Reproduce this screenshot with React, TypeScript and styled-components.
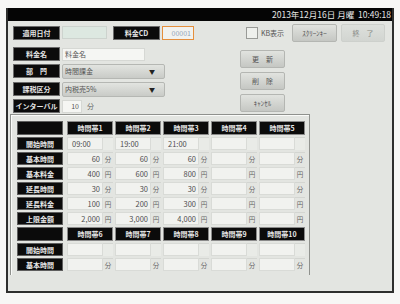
import styled, { createGlobalStyle } from 'styled-components';

const GlobalStyle = createGlobalStyle`
  html, body {
    margin: 0;
    padding: 0;
    background: #f7f7f5;
  }
  body {
    font-family: "Noto Sans CJK JP", "Noto Sans", sans-serif;
  }
`;

interface Row {
  label: string;
  unit: string;
  values: string[];
  left?: boolean;
}

const firstSlots = ['時間帯1', '時間帯2', '時間帯3', '時間帯4', '時間帯5'];
const secondSlots = ['時間帯6', '時間帯7', '時間帯8', '時間帯9', '時間帯10'];

const firstRows: Row[] = [
  { label: '開始時間', unit: '', values: ['09:00', '19:00', '21:00', '', ''], left: true },
  { label: '基本時間', unit: '分', values: ['60', '60', '60', '', ''] },
  { label: '基本料金', unit: '円', values: ['400', '600', '800', '', ''] },
  { label: '延長時間', unit: '分', values: ['30', '30', '30', '', ''] },
  { label: '延長料金', unit: '円', values: ['100', '200', '300', '', ''] },
  { label: '上限金額', unit: '円', values: ['2,000', '3,000', '4,000', '', ''] },
];

const secondRows: Row[] = [
  { label: '開始時間', unit: '', values: ['', '', '', '', ''], left: true },
  { label: '基本時間', unit: '分', values: ['', '', '', '', ''] },
];

const SlotTable = ({ slots, rows }: { slots: string[]; rows: Row[] }) => (
  <>
    <TableRow $height={14}>
      <RowLabel />
      {slots.map((s) => (
        <ColHead key={s}>{s}</ColHead>
      ))}
    </TableRow>
    {rows.map((r) => (
      <TableRow key={r.label} $height={13}>
        <RowLabel>{r.label}</RowLabel>
        {r.values.map((v, i) => (
          <SlotCell key={i}>
            <CellInput $left={r.left}>{v}</CellInput>
            <Unit $empty={!r.unit}>{r.unit}</Unit>
          </SlotCell>
        ))}
      </TableRow>
    ))}
  </>
);

export default function App() {
  return (
    <>
      <GlobalStyle />
      <Screen>
        <Header>2013年12月16日 月曜&nbsp;&nbsp;10:49:18</Header>
        <Body>
          <Top>
            <FormCol>
              <FormRow $height={17}>
                <Label>適用日付</Label>
                <DateInput />
                <Label $gap={6}>料金CD</Label>
                <CodeInput>00001</CodeInput>
              </FormRow>
              <Fields>
                <FormRow $height={14}>
                  <Label>料金名</Label>
                  <TextInput $width={83}>料金名</TextInput>
                </FormRow>
                <FormRow $height={16}>
                  <Label>部　門</Label>
                  <Select>
                    時間課金
                    <Arrow>▼</Arrow>
                  </Select>
                </FormRow>
                <FormRow $height={16}>
                  <Label>課税区分</Label>
                  <Select>
                    内税売5%
                    <Arrow>▼</Arrow>
                  </Select>
                </FormRow>
                <FormRow $height={14}>
                  <Label>インターバル</Label>
                  <TextInput $width={20} $right>
                    10
                  </TextInput>
                  <InlineUnit>分</InlineUnit>
                </FormRow>
              </Fields>
            </FormCol>
            <ActionCol>
              <ActionBar>
                <CheckBox />
                <CheckText>KB表示</CheckText>
                <BarButtons>
                  <Button $width={45}>ｽｸﾘｰﾝｷｰ</Button>
                  <Button $width={44} $disabled>
                    終　了
                  </Button>
                </BarButtons>
              </ActionBar>
              <ButtonStack>
                <Button $width={45}>更　新</Button>
                <Button $width={45}>削　除</Button>
                <Button $width={45}>ｷｬﾝｾﾙ</Button>
              </ButtonStack>
            </ActionCol>
          </Top>
          <Panel>
            <Table>
              <SlotTable slots={firstSlots} rows={firstRows} />
              <SlotTable slots={secondSlots} rows={secondRows} />
            </Table>
          </Panel>
        </Body>
      </Screen>
    </>
  );
}

const Screen = styled.div`
  box-sizing: border-box;
  width: 388px;
  height: 285px;
  margin: 8px 0 0 6px;
  background: #e3e5e1;
  border: 2px solid #2e2f2d;
  border-top: none;
  display: flex;
  flex-direction: column;
  overflow: hidden;
`;

const Header = styled.div`
  height: 13px;
  flex: none;
  background: #050505;
  color: #e6e6e6;
  font-size: 8.5px;
  line-height: 13px;
  display: flex;
  justify-content: flex-end;
  padding-right: 1px;
  white-space: nowrap;
`;

const Body = styled.div`
  padding: 3px 0 0 2px;
  display: flex;
  flex-direction: column;
`;

const Top = styled.div`
  display: flex;
  padding-left: 3px;
`;

const FormCol = styled.div`
  width: 227px;
  display: flex;
  flex-direction: column;
`;

const Fields = styled.div`
  margin-top: 6px;
  display: flex;
  flex-direction: column;
  gap: 2px;
`;

const FormRow = styled.div<{ $height: number }>`
  height: ${(p) => p.$height}px;
  display: flex;
  align-items: center;
`;

const Label = styled.div<{ $gap?: number }>`
  box-sizing: border-box;
  width: 47px;
  height: 14px;
  margin-left: ${(p) => p.$gap ?? 0}px;
  background: #0b0b0b;
  border: 1px solid #6b6b6b;
  color: #e4e4e4;
  font-size: 7px;
  font-weight: bold;
  display: flex;
  align-items: center;
  justify-content: center;
  white-space: nowrap;
`;

const DateInput = styled.div`
  box-sizing: border-box;
  width: 45px;
  height: 13px;
  margin-left: 2px;
  background: #dde8e1;
  border: 1px solid #cdd3ce;
`;

const CodeInput = styled.div`
  box-sizing: border-box;
  width: 32px;
  height: 14px;
  margin-left: 2px;
  background: #f1f2ef;
  border: 1px solid #e58f3c;
  color: #93a4b8;
  font-size: 7px;
  display: flex;
  align-items: center;
  justify-content: flex-end;
  padding-right: 2px;
`;

const TextInput = styled.div<{ $width: number; $right?: boolean }>`
  box-sizing: border-box;
  width: ${(p) => p.$width}px;
  height: 13px;
  margin-left: 2px;
  background: #f5f6f3;
  border: 1px solid #d6d8d4;
  color: #555;
  font-size: 7px;
  display: flex;
  align-items: center;
  justify-content: ${(p) => (p.$right ? 'flex-end' : 'flex-start')};
  padding: 0 2px;
`;

const InlineUnit = styled.span`
  margin-left: 5px;
  font-size: 7px;
  color: #666;
`;

const Select = styled.div`
  box-sizing: border-box;
  width: 103px;
  height: 15px;
  margin-left: 2px;
  background: linear-gradient(#e2e4e0, #c9cbc7);
  border: 1px solid #b5b7b3;
  border-radius: 2px;
  color: #555;
  font-size: 7px;
  display: flex;
  align-items: center;
  padding: 0 2px;
`;

const Arrow = styled.span`
  margin-left: auto;
  margin-right: 7px;
  font-size: 6px;
  color: #222;
`;

const ActionCol = styled.div`
  width: 145px;
  display: flex;
  flex-direction: column;
`;

const ActionBar = styled.div`
  height: 17px;
  display: flex;
  align-items: center;
`;

const CheckBox = styled.div`
  box-sizing: border-box;
  width: 12px;
  height: 12px;
  margin-left: 6px;
  background: #eef0ec;
  border: 1px solid #999b97;
`;

const CheckText = styled.span`
  margin-left: 3px;
  font-size: 7px;
  color: #555;
`;

const BarButtons = styled.div`
  margin-left: auto;
  display: flex;
  gap: 4px;
`;

const Button = styled.div<{ $width: number; $disabled?: boolean }>`
  box-sizing: border-box;
  width: ${(p) => p.$width}px;
  height: 18px;
  background: ${(p) =>
    p.$disabled ? 'linear-gradient(#dde0dc, #d2d5d1)' : 'linear-gradient(#e1e3df, #c5c7c3)'};
  border: 1px solid ${(p) => (p.$disabled ? '#cdd0cc' : '#b4b6b2')};
  border-radius: 2px;
  color: ${(p) => (p.$disabled ? '#8a8c88' : '#555')};
  font-size: 7px;
  display: flex;
  align-items: center;
  justify-content: center;
  white-space: nowrap;
`;

const ButtonStack = styled.div`
  margin-top: 9px;
  display: flex;
  flex-direction: column;
  gap: 4px;
`;

const Panel = styled.div`
  box-sizing: border-box;
  width: 300px;
  height: 161px;
  margin-top: 1px;
  padding: 6px 0 0 6px;
  border: 1px solid #8f918d;
  border-bottom: none;
  box-shadow: inset 1px 1px 0 #fafbf9;
  overflow: hidden;
`;

const Table = styled.div`
  display: flex;
  flex-direction: column;
  gap: 2px;
`;

const TableRow = styled.div<{ $height: number }>`
  height: ${(p) => p.$height}px;
  display: grid;
  grid-template-columns: 48px repeat(5, 46px);
  column-gap: 2px;
`;

const RowLabel = styled.div`
  box-sizing: border-box;
  width: 46px;
  background: #0b0b0b;
  border: 1px solid #5e5e5e;
  color: #e8e8e8;
  font-size: 7px;
  font-weight: bold;
  display: flex;
  align-items: center;
  justify-content: center;
`;

const ColHead = styled.div`
  box-sizing: border-box;
  background: #0b0b0b;
  border: 1px solid #8a8a8a;
  color: #e8e8e8;
  font-size: 7px;
  font-weight: bold;
  display: flex;
  align-items: center;
  justify-content: center;
`;

const SlotCell = styled.div`
  display: flex;
`;

const CellInput = styled.div<{ $left?: boolean }>`
  box-sizing: border-box;
  width: 36px;
  background: #f1f2ef;
  border: 1px solid #d9dbd7;
  color: #4e4e4e;
  font-size: 7.5px;
  display: flex;
  align-items: center;
  justify-content: ${(p) => (p.$left ? 'flex-start' : 'flex-end')};
  padding: 0 2px 0 ${(p) => (p.$left ? 4 : 2)}px;
`;

const Unit = styled.div<{ $empty: boolean }>`
  box-sizing: border-box;
  width: 10px;
  background: ${(p) => (p.$empty ? '#e9ebe7' : 'transparent')};
  border-top: 1px solid #d3d5d1;
  color: #666;
  font-size: 6.5px;
  display: flex;
  align-items: center;
  justify-content: center;
`;
